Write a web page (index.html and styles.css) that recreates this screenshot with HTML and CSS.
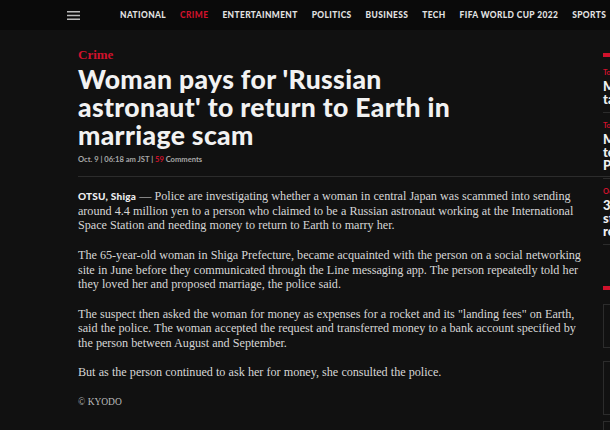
FILE: index.html
```html
<!DOCTYPE html>
<html lang="en">
<head>
    <meta charset="UTF-8">
    <meta name="viewport" content="width=device-width, initial-scale=1.0">
    <title>Woman pays for 'Russian astronaut' to return to Earth in marriage scam</title>
    <link rel="stylesheet" href="styles.css">
</head>
<body>
    <nav class="topnav">
        <span class="menu-icon">
            <svg width="13" height="9" viewBox="0 0 13 9"><path d="M0 0.75h13M0 4.5h13M0 8.25h13" stroke="#bbb" stroke-width="1.3"/></svg>
        </span>
        <a href="#">National</a>
        <a href="#" class="active">Crime</a>
        <a href="#">Entertainment</a>
        <a href="#">Politics</a>
        <a href="#">Business</a>
        <a href="#">Tech</a>
        <a href="#">FIFA World Cup 2022</a>
        <a href="#">Sports</a>
        <a href="#">Features</a>
    </nav>

    <div class="page">
        <main class="article">
            <div class="category">Crime</div>
            <h1>Woman pays for 'Russian astronaut' to return to Earth in marriage scam</h1>
            <div class="meta">Oct. 9 <span class="sep">|</span> 06:18 am JST <span class="sep">|</span> <span class="count">59</span> Comments</div>

            <div class="article-body">
                <p><span class="dateline">OTSU, Shiga</span> &mdash; Police are investigating whether a woman in central Japan was scammed into sending<br>
                around 4.4 million yen to a person who claimed to be a Russian astronaut working at the International<br>
                Space Station and needing money to return to Earth to marry her.</p>
                <p>The 65-year-old woman in Shiga Prefecture, became acquainted with the person on a social networking<br>
                site in June before they communicated through the Line messaging app. The person repeatedly told her<br>
                they loved her and proposed marriage, the police said.</p>
                <p>The suspect then asked the woman for money as expenses for a rocket and its "landing fees" on Earth,<br>
                said the police. The woman accepted the request and transferred money to a bank account specified by<br>
                the person between August and September.</p>
                <p>But as the person continued to ask her for money, she consulted the police.</p>
                <p class="credit">&copy; KYODO</p>
            </div>
        </main>

        <aside class="sidebar">
            <div class="side-head"></div>
            <div class="side-item">
                <div class="side-cat">Tokyo</div>
                <div class="side-title">Man arrested for<br>taking photos of women</div>
            </div>
            <div class="side-item">
                <div class="side-cat">Tokyo</div>
                <div class="side-title">Man arrested over<br>teenager's death at<br>Police box</div>
            </div>
            <div class="side-item">
                <div class="side-cat">Oct. 8</div>
                <div class="side-title">3 arrested over<br>stolen luxury cars<br>resold overseas</div>
            </div>

            <div class="side-head second"></div>
            <div class="side-box"></div>
            <div class="side-box tall"></div>
            <div class="side-box"></div>
        </aside>
    </div>
</body>
</html>
```

FILE: styles.css
```css
/* General */
body {
    margin: 0;
    background: #111;
    color: #ddd;
    font-family: Lato, "Liberation Sans", sans-serif;
    overflow: hidden;
}

/* Top navigation */
.topnav {
    display: flex;
    align-items: center;
    height: 30px;
    padding-left: 67px;
    background: #0a0a0a;
    white-space: nowrap;
}

.menu-icon {
    display: flex;
    margin-right: 40px;
}

.topnav a {
    color: #e2e2e2;
    text-decoration: none;
    text-transform: uppercase;
    font-weight: 900;
    font-size: 8.4px;
    letter-spacing: 0.4px;
    margin-right: 14px;
}

.topnav a.active {
    color: #d0122c;
}

/* Page layout */
.page {
    display: flex;
    gap: 13px;
    padding-left: 78px;
}

.article {
    flex: 0 0 512px;
    padding-top: 17px;
}

.category {
    color: #d0122c;
    font-family: "Liberation Serif", serif;
    font-weight: bold;
    font-size: 13px;
    line-height: 15px;
}

h1 {
    margin: 3px 0 0;
    color: #f2f2f2;
    font-weight: 900;
    font-size: 26.5px;
    line-height: 28px;
    letter-spacing: 0.35px;
    width: 420px;
}

.meta {
    margin-top: 5px;
    color: #a8a8a8;
    font-size: 7.6px;
    font-weight: bold;
}

.meta .count {
    color: #d0122c;
}

.article-body {
    margin-top: 12px;
    margin-right: -20px;
    padding-top: 12px;
    border-top: 1px solid #2c2c2c;
    font-family: "Liberation Serif", serif;
    font-size: 12.2px;
    line-height: 14.7px;
    letter-spacing: -0.05px;
    word-spacing: 0.2px;
    color: #d6d6d6;
}

.article-body p {
    margin: 0 0 14.7px;
}

.dateline {
    font-family: Lato, "Liberation Sans", sans-serif;
    font-weight: 900;
    font-size: 10px;
    letter-spacing: 0.2px;
    color: #eee;
}

.credit {
    font-size: 9.5px;
    color: #bbb;
}

/* Sidebar */
.sidebar {
    flex: 0 0 280px;
    padding-top: 23px;
}

.side-head {
    width: 30px;
    height: 4px;
    background: #d0122c;
    margin-bottom: 3px;
}

.side-head.second {
    margin-top: 41px;
    margin-bottom: 14px;
}

.side-item {
    padding: 8px 0 6px;
    border-bottom: 1px solid #2c2c2c;
}

.side-cat {
    color: #d0122c;
    font-size: 7.4px;
    line-height: 9px;
    font-weight: bold;
    margin-bottom: 3px;
}

.side-title {
    color: #f0f0f0;
    font-weight: 900;
    font-size: 13px;
    line-height: 13px;
    white-space: nowrap;
}

.side-box {
    height: 42px;
    border: 1px solid #2c2c2c;
    margin-bottom: 13px;
}

.side-box.tall {
    height: 52px;
    margin-bottom: 6px;
}
```
